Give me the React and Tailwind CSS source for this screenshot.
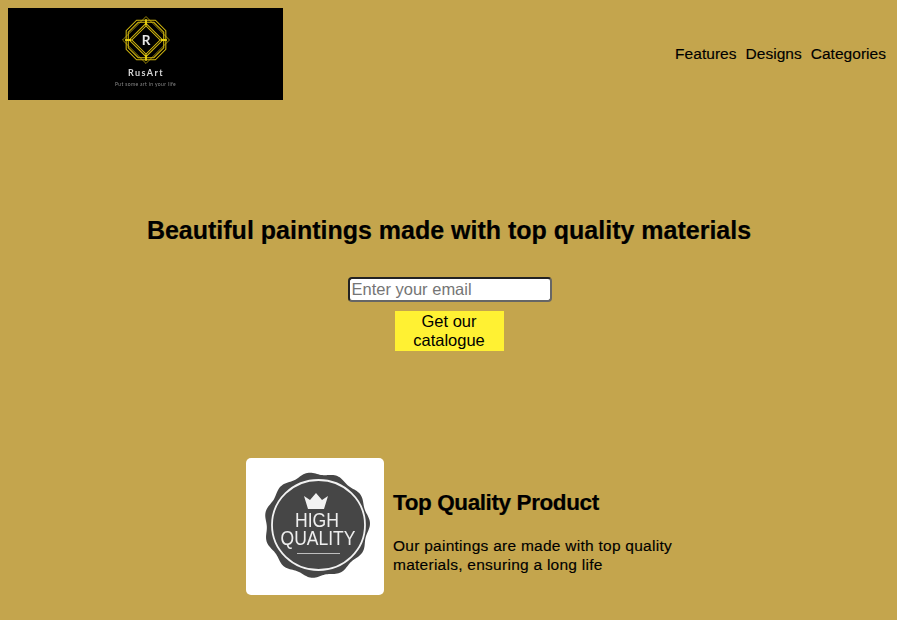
const wave = (() => {
  const pts = [];
  for (let i = 0; i < 240; i++) {
    const t = (i / 240) * Math.PI * 2;
    const r = 51.6 + 1.4 * Math.cos(11 * t + 0.4);
    pts.push(`${(71 + r * Math.cos(t)).toFixed(2)},${(67 + r * Math.sin(t)).toFixed(2)}`);
  }
  return "M" + pts.join("L") + "Z";
})();

function Logo() {
  return (
    <div className="w-[275px] h-[92px] bg-black flex flex-col items-center shrink-0">
      <svg width="48" height="48" viewBox="0 0 46 46" className="mt-[8px] ml-[1px] shrink-0 blur-[0.3px]" fill="none" stroke="#d4b90f">
        <path d="M23 0.5L45.500 23L23 45.500L0.500 23Z" strokeWidth="0.7" />
        <path d="M14 4H32L42 14V32L32 42H14L4 32V14Z" strokeWidth="1" />
        <path d="M15.500 6H30.500L40 15.500V30.500L30.500 40H15.500L6 30.500V15.500Z" strokeWidth="1" />
        <path d="M23 7L39 23L23 39L7 23Z" strokeWidth="1" />
        <path d="M23 9.500L36.500 23L23 36.500L9.500 23Z" strokeWidth="1" />
        <path d="M23 3V9M23 37V43M3 23H9M37 23H43" stroke="#e8d010" strokeWidth="1.800" />
        <text x="23" y="28" textAnchor="middle" fill="#e6e6e6" stroke="none" fontSize="13" fontWeight="700" fontFamily="Lato, sans-serif">R</text>
      </svg>
      <div className="mt-[3px] ml-[1px] text-[9px] leading-[11px] font-bold tracking-[1.4px] text-[#d8d8d8] font-['Lato',sans-serif] blur-[0.2px]">RusArt</div>
      <div className="mt-[3px] text-[5px] leading-[7px] tracking-[0.35px] text-[#8a8a8a] font-['Lato',sans-serif] blur-[0.2px]">Put some art in your life</div>
    </div>
  );
}

function Badge() {
  return (
    <div className="w-[138px] h-[137px] rounded-[5px] bg-white shrink-0">
      <svg width="138" height="137" viewBox="0 0 138 137" className="block blur-[0.3px]">
        <path fill="#464646" d={wave} />
        <ellipse cx="72.500" cy="67" rx="46.500" ry="45" fill="none" stroke="#f2f2f2" strokeWidth="1.800" />
        <path fill="#f2f2f2" d="M58 38 L64 42 L70 35 L76 42 L82 38 L78 51 H62 Z" />
        <text x="71" y="69" textAnchor="middle" fill="#eeeeee" fontSize="19.500" fontFamily="Liberation Sans, sans-serif" textLength="44" lengthAdjust="spacingAndGlyphs">HIGH</text>
        <text x="72" y="87" textAnchor="middle" fill="#eeeeee" fontSize="19.500" fontFamily="Liberation Sans, sans-serif" textLength="75" lengthAdjust="spacingAndGlyphs">QUALITY</text>
        <path stroke="#bdbdbd" strokeWidth="1" d="M51 95.500H94" />
      </svg>
    </div>
  );
}

export default function App() {
  return (
    <div className="w-[897px] h-[620px] overflow-hidden bg-[#c4a54d] text-black font-['Liberation_Sans',sans-serif]">
      <header className="flex items-center justify-between pt-2 pl-2 pr-[11px]">
        <Logo />
        <nav className="flex gap-[9px] text-[15.5px] leading-[18px] tracking-[0.03px] [-webkit-text-stroke:0.15px_black]">
          <span>Features</span>
          <span>Designs</span>
          <span>Categories</span>
        </nav>
      </header>

      <section className="flex flex-col items-center pt-[115px]">
        <h1 className="text-[25px] leading-[30px] font-bold ml-[1px] [-webkit-text-stroke:0.2px_black]">
          Beautiful paintings made with top quality materials
        </h1>
        <input
          placeholder="Enter your email"
          className="mt-[32px] ml-[2px] w-[204px] h-[25px] rounded-[4px] border-2 border-t-[#222] border-l-[#222] border-r-[#666] border-b-[#666] bg-white px-[2px] text-[16.5px] placeholder:text-[#757575] outline-none"
        />
        <button className="mt-[9px] ml-[1px] w-[109px] h-[40px] bg-[#fff133] text-[16.5px] leading-[19px] text-center px-4">
          Get our catalogue
        </button>
      </section>

      <section className="flex items-center mt-[107px] ml-[246px]">
        <Badge />
        <div className="ml-[9px] w-[300px] mt-[9px]">
          <h2 className="text-[22.5px] leading-[28px] font-bold tracking-[-0.4px] [-webkit-text-stroke:0.2px_black]">Top Quality Product</h2>
          <p className="mt-[19px] text-[15.5px] leading-[19px] tracking-[0.26px] [-webkit-text-stroke:0.15px_black]">
            Our paintings are made with top quality materials, ensuring a long life
          </p>
        </div>
      </section>
    </div>
  );
}
